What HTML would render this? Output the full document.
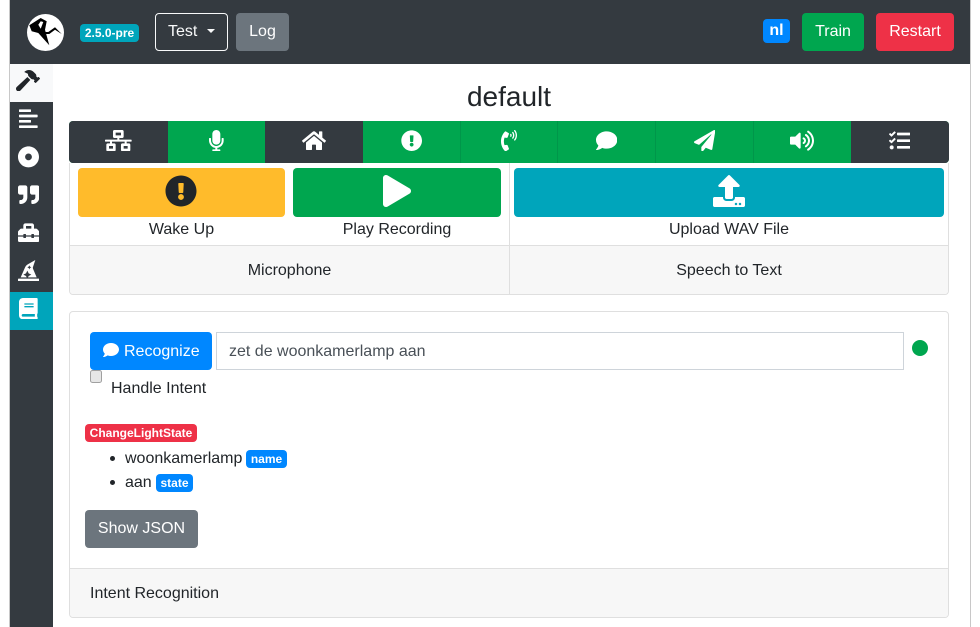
<!DOCTYPE html>
<html lang="en">
<head>
<meta charset="utf-8">
<title>default</title>
<style>
html,body{margin:0;padding:0;background:#fff}
body{width:980px;height:627px;position:relative;overflow:hidden;font:16px/24px "Liberation Sans",sans-serif;color:#212529}
div,span,svg{position:absolute;box-sizing:border-box}
svg{fill:#fff;display:block}
.t{white-space:nowrap;text-align:center}
.btn{border-radius:4px;color:#fff;text-align:center;line-height:36px;white-space:nowrap}
.badge{border-radius:4px;color:#fff;font-weight:700;font-size:12px;line-height:18px;text-align:center;white-space:nowrap}
.tb{top:121px;height:42px}
.dark{background:#343a40}
.green{background:#00a64f}
.sep{position:absolute;top:121px;width:1px;height:42px;background:#00964a}
</style>
</head>
<body>
<!-- frame lines -->
<div style="left:9px;top:0;width:1px;height:627px;background:#c8c8c8"></div>
<div style="left:970px;top:0;width:1px;height:627px;background:#c8c8c8"></div>

<!-- navbar -->
<div class="dark" style="left:10px;top:0;width:960px;height:64px"></div>
<div style="left:27px;top:14px;width:37px;height:37px;border-radius:50%;background:#fff"></div>
<svg viewBox="0 0 37 37" style="left:27px;top:14px;width:37px;height:37px;fill:#000">
<path d="M2.300 11.300 L13.700 4 L19.700 7.300 L18 15.700 L22.300 31.300 L11.300 19 L4.700 17.300 Z"/>
<path d="M17 18 L21.300 18 L28 13.300 L34.700 20 L28 15.700 L22.300 20 L17 20 Z"/>
<path d="M13.700 7.300 L16.300 8 L13.700 14.700 L11.300 10.700 Z" fill="#fff"/>
</svg>
<div class="badge" style="left:80px;top:24px;width:59px;height:18px;background:#00a5bb">2.5.0-pre</div>
<div class="btn" style="left:155px;top:13px;width:73px;height:38px;border:1px solid #f8f9fa;color:#f8f9fa"></div>
<div class="t" style="left:168px;top:20px;color:#f8f9fa">Test</div>
<div style="left:207px;top:29px;width:0;height:0;border-top:4px solid #f8f9fa;border-left:4px solid transparent;border-right:4px solid transparent"></div>
<div class="btn" style="left:236px;top:13px;width:53px;height:38px;background:#6c757d;line-height:38px">Log</div>
<div class="btn" style="left:763px;top:19px;width:27px;height:24px;background:#0087ff;font-weight:700;line-height:24px">nl</div>
<div class="btn" style="left:802px;top:13px;width:62px;height:38px;background:#00a64f;line-height:38px">Train</div>
<div class="btn" style="left:876px;top:13px;width:78px;height:38px;background:#ee3147;line-height:38px">Restart</div>

<!-- sidebar -->
<div class="dark" style="left:10px;top:64px;width:43px;height:563px"></div>
<div style="left:10px;top:64px;width:43px;height:38px;background:#f8f9fa"></div>
<div style="left:10px;top:292px;width:43px;height:38px;background:#00a5bb"></div>
<svg viewBox="0 0 576 512" style="left:16px;top:70px;width:24px;height:21.33px;fill:#212529"><path d="M571.31 193.94l-22.63-22.63c-6.25-6.25-16.38-6.25-22.63 0l-11.31 11.31-28.9-28.9c5.63-21.31.36-44.9-16.35-61.61l-45.25-45.25c-62.48-62.48-163.79-62.48-226.28 0l90.51 45.25v18.75c0 16.97 6.74 33.25 18.75 45.25l49.14 49.14c16.71 16.71 40.3 21.98 61.61 16.35l28.9 28.9-11.31 11.31c-6.25 6.25-6.25 16.38 0 22.63l22.63 22.63c6.25 6.25 16.38 6.25 22.63 0l90.51-90.51c6.23-6.24 6.23-16.37-.02-22.62zm-286.72-15.2c-3.7-3.7-6.84-7.79-9.85-11.95L19.64 404.96c-25.57 23.88-26.26 64.19-1.53 88.93s65.05 24.05 88.93-1.53l238.13-255.07c-3.96-2.91-7.9-5.87-11.44-9.41l-49.14-49.14z"/></svg>
<svg viewBox="0 0 448 512" style="left:19px;top:108px;width:18.67px;height:21.33px"><path d="M12.83 352h262.34A12.82 12.82 0 0 0 288 339.17v-38.34A12.82 12.82 0 0 0 275.17 288H12.83A12.82 12.82 0 0 0 0 300.83v38.34A12.82 12.82 0 0 0 12.83 352zm0-256h262.34A12.82 12.82 0 0 0 288 83.17V44.83A12.82 12.82 0 0 0 275.17 32H12.83A12.82 12.82 0 0 0 0 44.83v38.34A12.82 12.82 0 0 0 12.83 96zM432 160H16a16 16 0 0 0-16 16v32a16 16 0 0 0 16 16h416a16 16 0 0 0 16-16v-32a16 16 0 0 0-16-16zm0 256H16a16 16 0 0 0-16 16v32a16 16 0 0 0 16 16h416a16 16 0 0 0 16-16v-32a16 16 0 0 0-16-16z"/></svg>
<svg viewBox="0 0 496 512" style="left:18px;top:146px;width:21px;height:21.67px"><path fill-rule="evenodd" d="M248 8C111 8 0 119 0 256s111 248 248 248 248-111 248-248S385 8 248 8zm0 168c44.200 0 80 35.800 80 80s-35.800 80-80 80-80-35.800-80-80 35.800-80 80-80z"/></svg>
<svg viewBox="0 0 512 512" style="left:18px;top:184px;width:21.33px;height:21.33px"><path d="M464 32H336c-26.5 0-48 21.5-48 48v128c0 26.5 21.5 48 48 48h80v64c0 35.3-28.7 64-64 64h-8c-13.3 0-24 10.7-24 24v48c0 13.3 10.7 24 24 24h8c88.4 0 160-71.6 160-160V80c0-26.5-21.5-48-48-48zm-288 0H48C21.5 32 0 53.500 0 80v128c0 26.5 21.5 48 48 48h80v64c0 35.3-28.7 64-64 64h-8c-13.3 0-24 10.7-24 24v48c0 13.3 10.7 24 24 24h8c88.4 0 160-71.6 160-160V80c0-26.5-21.5-48-48-48z"/></svg>
<svg viewBox="0 0 512 512" style="left:17.500px;top:222px;width:21.33px;height:21.33px"><path d="M502.63 214.63l-45.25-45.25c-6-6-14.14-9.37-22.63-9.37H384V80c0-26.51-21.49-48-48-48H176c-26.51 0-48 21.49-48 48v80H77.25c-8.49 0-16.62 3.37-22.63 9.37L9.37 214.63c-6 6-9.37 14.14-9.37 22.63V320h128v-16c0-8.84 7.16-16 16-16h32c8.84 0 16 7.16 16 16v16h128v-16c0-8.84 7.16-16 16-16h32c8.84 0 16 7.16 16 16v16h128v-82.75c0-8.48-3.37-16.62-9.37-22.62zM320 160H192V96h128v64zm64 208c0 8.84-7.16 16-16 16h-32c-8.84 0-16-7.16-16-16v-16H192v16c0 8.84-7.16 16-16 16h-32c-8.84 0-16-7.16-16-16v-16H0v96c0 17.67 14.33 32 32 32h448c17.67 0 32-14.33 32-32v-96H384v16z"/></svg>
<svg viewBox="0 0 512 512" style="left:17.500px;top:260px;width:21.33px;height:21.33px"><path d="M496 448H16c-8.84 0-16 7.16-16 16v32c0 8.84 7.16 16 16 16h480c8.84 0 16-7.16 16-16v-32c0-8.84-7.16-16-16-16zm-304-64l-64-32 64-32 32-64 32 64 64 32-64 32-16 32h208l-86.41-201.63a63.955 63.955 0 0 1-1.89-45.45L416 0 228.42 107.19a127.989 127.989 0 0 0-53.46 59.15L64 416h144l-16-32zm64-224l16-32 16 32 32 16-32 16-16 32-16-32-32-16 32-16z"/></svg>
<svg viewBox="0 0 448 512" style="left:19px;top:298px;width:18.67px;height:21.33px"><path d="M448 360V24c0-13.3-10.7-24-24-24H96C43 0 0 43 0 96v320c0 53 43 96 96 96h328c13.3 0 24-10.7 24-24v-16c0-7.5-3.5-14.3-8.9-18.7-4.2-15.4-4.2-59.3 0-74.7 5.4-4.3 8.9-11.1 8.9-18.6zM128 134c0-3.3 2.7-6 6-6h212c3.3 0 6 2.7 6 6v20c0 3.3-2.7 6-6 6H134c-3.3 0-6-2.7-6-6v-20zm0 64c0-3.3 2.7-6 6-6h212c3.3 0 6 2.7 6 6v20c0 3.3-2.7 6-6 6H134c-3.3 0-6-2.7-6-6v-20zm253.4 250H96c-17.7 0-32-14.3-32-32 0-17.6 14.4-32 32-32h285.4c-1.9 17.1-1.9 46.9 0 64z"/></svg>

<!-- title -->
<div class="t" style="left:69px;top:80px;width:880px;font-size:28px;line-height:34px">default</div>

<!-- toolbar -->
<div class="green tb" style="left:69px;width:880px;border-radius:4px"></div>
<div class="dark tb" style="left:69px;width:99px;border-radius:4px 0 0 4px"></div>
<div class="dark tb" style="left:265px;width:98px"></div>
<div class="dark tb" style="left:851px;width:98px;border-radius:0 4px 4px 0"></div>
<span class="sep" style="left:460px"></span>
<span class="sep" style="left:557px"></span>
<span class="sep" style="left:655px"></span>
<span class="sep" style="left:753px"></span>

<svg viewBox="0 0 640 512" style="left:105px;top:130px;width:26.67px;height:21.33px"><path d="M640 264v-16c0-8.84-7.16-16-16-16H344v-40h72c17.67 0 32-14.33 32-32V32c0-17.67-14.33-32-32-32H224c-17.67 0-32 14.33-32 32v128c0 17.67 14.33 32 32 32h72v40H16c-8.84 0-16 7.16-16 16v16c0 8.84 7.16 16 16 16h104v40H64c-17.67 0-32 14.33-32 32v128c0 17.67 14.33 32 32 32h160c17.67 0 32-14.33 32-32V352c0-17.67-14.33-32-32-32h-56v-40h304v40h-56c-17.67 0-32 14.33-32 32v128c0 17.67 14.33 32 32 32h160c17.67 0 32-14.33 32-32V352c0-17.67-14.33-32-32-32h-56v-40h104c8.84 0 16-7.16 16-16zM256 128V64h128v64H256zm-64 320H96v-64h96v64zm352 0h-96v-64h96v64z"/></svg>
<svg viewBox="0 0 352 512" style="left:209px;top:130px;width:14.67px;height:21.33px"><path d="M176 352c53.02 0 96-42.98 96-96V96c0-53.02-42.98-96-96-96S80 42.98 80 96v160c0 53.02 42.98 96 96 96zm160-160h-16c-8.84 0-16 7.16-16 16v48c0 74.8-64.49 134.82-140.79 127.38C96.71 376.89 48 317.11 48 250.3V208c0-8.84-7.16-16-16-16H16c-8.84 0-16 7.16-16 16v40.16c0 89.64 63.97 169.55 152 181.69V464H96c-8.84 0-16 7.16-16 16v16c0 8.84 7.16 16 16 16h160c8.84 0 16-7.16 16-16v-16c0-8.84-7.16-16-16-16h-56v-33.77C285.71 418.47 352 344.9 352 256v-48c0-8.84-7.16-16-16-16z"/></svg>
<svg viewBox="0 0 576 512" style="left:302px;top:130px;width:24px;height:21.33px"><path d="M280.37 148.26L96 300.11V464a16 16 0 0 0 16 16l112.06-.29a16 16 0 0 0 15.92-16V368a16 16 0 0 1 16-16h64a16 16 0 0 1 16 16v95.64a16 16 0 0 0 16 16.05L464 480a16 16 0 0 0 16-16V300L295.67 148.26a12.19 12.19 0 0 0-15.3 0zM571.6 251.47L488 182.56V44.05a12 12 0 0 0-12-12h-56a12 12 0 0 0-12 12v72.61L318.47 43a48 48 0 0 0-61 0L4.34 251.47a12 12 0 0 0-1.6 16.9l25.5 31A12 12 0 0 0 45.15 301l235.22-193.74a12.19 12.19 0 0 1 15.3 0L530.9 301a12 12 0 0 0 16.9-1.6l25.5-31a12 12 0 0 0-1.7-16.93z"/></svg>
<svg viewBox="0 0 512 512" style="left:401px;top:130px;width:21.33px;height:21.33px"><path d="M504 256c0 136.997-111.043 248-248 248S8 392.997 8 256C8 119.083 119.043 8 256 8s248 111.083 248 248zm-248 50c-25.405 0-46 20.595-46 46s20.595 46 46 46 46-20.595 46-46-20.595-46-46-46zm-43.673-165.346l7.418 136c.347 6.364 5.609 11.346 11.982 11.346h48.546c6.373 0 11.635-4.982 11.982-11.346l7.418-136c.375-6.874-5.098-12.654-11.982-12.654h-63.383c-6.884 0-12.356 5.78-11.981 12.654z"/></svg>
<svg viewBox="0 0 384 512" style="left:501px;top:130px;width:16px;height:21.33px"><path d="M97.333 506.966c-129.874-129.874-129.681-340.252 0-469.933 5.698-5.698 14.527-6.632 21.263-2.422l64.817 40.513a17.187 17.187 0 0 1 6.849 20.958l-32.408 81.021a17.188 17.188 0 0 1-17.669 10.719l-55.81-5.58c-21.051 58.261-20.612 122.471 0 179.515l55.811-5.581a17.188 17.188 0 0 1 17.669 10.719l32.408 81.022a17.188 17.188 0 0 1-6.849 20.958l-64.817 40.513a17.19 17.19 0 0 1-21.264-2.422zM247.126 95.473c11.832 20.047 11.832 45.008 0 65.055-3.95 6.693-13.108 7.959-18.718 2.581l-5.975-5.726c-3.911-3.748-4.793-9.622-2.261-14.41a32.063 32.063 0 0 0 0-29.945c-2.533-4.788-1.65-10.662 2.261-14.41l5.975-5.726c5.61-5.378 14.768-4.112 18.718 2.581zm91.787-91.187c60.14 71.604 60.092 175.882 0 247.428-4.474 5.327-12.53 5.746-17.552.933l-5.798-5.557c-4.56-4.371-4.977-11.529-.93-16.379 49.687-59.538 49.646-145.933 0-205.422-4.047-4.85-3.631-12.008.93-16.379l5.798-5.557c5.022-4.813 13.078-4.394 17.552.933zm-45.972 44.941c36.05 46.322 36.108 111.149 0 157.546-4.39 5.641-12.697 6.251-17.856 1.304l-5.818-5.579c-4.4-4.219-4.998-11.095-1.285-15.931 26.536-34.564 26.534-82.572 0-117.134-3.713-4.836-3.115-11.711 1.285-15.931l5.818-5.579c5.159-4.947 13.466-4.337 17.856 1.304z"/></svg>
<svg viewBox="0 0 512 512" style="left:596px;top:130px;width:21.33px;height:21.33px"><path d="M256 32C114.6 32 0 125.1 0 240c0 49.6 21.4 95 57 130.7C44.5 421.1 2.7 466 2.2 466.5c-2.2 2.3-2.8 5.7-1.5 8.7S4.8 480 8 480c66.3 0 116-31.8 140.6-51.4 32.7 12.3 69 19.4 107.4 19.4 141.4 0 256-93.1 256-208S397.4 32 256 32z"/></svg>
<svg viewBox="0 0 512 512" style="left:694px;top:130px;width:21.33px;height:21.33px"><path d="M476 3.2L12.5 270.6c-18.1 10.4-15.8 35.6 2.2 43.2L121 358.4l287.3-253.2c5.5-4.9 13.3 2.6 8.6 8.3L176 407v80.500c0 23.6 28.5 32.9 42.5 15.8L282 426l124.6 52.2c14.2 6 30.4-2.9 33-18.2l72-432C515 7.8 493.3-6.8 476 3.2z"/></svg>
<svg viewBox="0 0 576 512" style="left:790px;top:130px;width:24px;height:21.33px"><path d="M215.03 71.05L126.06 160H24c-13.26 0-24 10.74-24 24v144c0 13.25 10.74 24 24 24h102.06l88.97 88.95c15.03 15.03 40.97 4.47 40.97-16.97V88.02c0-21.46-25.96-31.98-40.97-16.97zm233.32-51.08c-11.17-7.33-26.18-4.24-33.51 6.95-7.34 11.17-4.22 26.18 6.95 33.51 66.27 43.49 105.82 116.6 105.82 195.58 0 78.98-39.55 152.09-105.82 195.58-11.17 7.32-14.29 22.34-6.95 33.5 7.04 10.71 21.93 14.56 33.51 6.95C528.27 439.58 576 351.33 576 256S528.27 72.43 448.35 19.97zM480 256c0-63.53-32.06-121.94-85.77-156.24-11.19-7.14-26.03-3.82-33.12 7.46s-3.78 26.21 7.41 33.36C408.27 165.97 432 209.11 432 256s-23.73 90.03-63.48 115.42c-11.19 7.14-14.5 22.07-7.41 33.36 6.51 10.36 21.12 15.14 33.12 7.46C447.94 377.94 480 319.54 480 256zm-141.77-76.87c-11.58-6.33-26.19-2.16-32.61 9.45-6.39 11.61-2.16 26.2 9.45 32.61C327.98 228.28 336 241.63 336 256c0 14.38-8.02 27.72-20.92 34.81-11.61 6.41-15.84 21-9.45 32.61 6.43 11.66 21.05 15.8 32.61 9.45 28.23-15.55 45.77-45 45.77-76.88s-17.54-61.32-45.78-76.86z"/></svg>
<svg viewBox="0 0 512 512" style="left:889px;top:130px;width:21.33px;height:21.33px"><path d="M139.61 35.5a12 12 0 0 0-17 0L58.93 98.81l-22.7-22.12a12 12 0 0 0-17 0L3.53 92.41a12 12 0 0 0 0 17l47.59 47.4a12.78 12.78 0 0 0 17.61 0l15.59-15.62L156.52 69a12.09 12.09 0 0 0 .09-17zm0 159.19a12 12 0 0 0-17 0l-63.68 63.72-22.7-22.1a12 12 0 0 0-17 0L3.53 252a12 12 0 0 0 0 17L51 316.5a12.77 12.77 0 0 0 17.6 0l15.7-15.69 72.2-72.22a12 12 0 0 0 .09-16.9zM64 368c-26.49 0-48.59 21.5-48.59 48S37.53 464 64 464a48 48 0 0 0 0-96zm432 16H208a16 16 0 0 0-16 16v32a16 16 0 0 0 16 16h288a16 16 0 0 0 16-16v-32a16 16 0 0 0-16-16zm0-320H208a16 16 0 0 0-16 16v32a16 16 0 0 0 16 16h288a16 16 0 0 0 16-16V80a16 16 0 0 0-16-16zm0 160H208a16 16 0 0 0-16 16v32a16 16 0 0 0 16 16h288a16 16 0 0 0 16-16v-32a16 16 0 0 0-16-16z"/></svg>

<!-- card 1 -->
<div style="left:69px;top:163px;width:880px;height:132px;border:1px solid #dfdfdf;border-top:0;border-radius:0 0 4px 4px"></div>
<div style="left:70px;top:246px;width:878px;height:48px;background:#f7f7f7;border-radius:0 0 3px 3px"></div>
<div style="left:70px;top:245px;width:878px;height:1px;background:#dfdfdf"></div>
<div style="left:509px;top:163px;width:1px;height:131px;background:#dfdfdf"></div>

<div style="left:78px;top:168px;width:207px;height:49px;background:#ffbb2b;border-radius:4px"></div>
<svg viewBox="0 0 512 512" style="left:165px;top:175px;width:32px;height:32px;fill:#212529"><path d="M504 256c0 136.997-111.043 248-248 248S8 392.997 8 256C8 119.083 119.043 8 256 8s248 111.083 248 248zm-248 50c-25.405 0-46 20.595-46 46s20.595 46 46 46 46-20.595 46-46-20.595-46-46-46zm-43.673-165.346l7.418 136c.347 6.364 5.609 11.346 11.982 11.346h48.546c6.373 0 11.635-4.982 11.982-11.346l7.418-136c.375-6.874-5.098-12.654-11.982-12.654h-63.383c-6.884 0-12.356 5.78-11.981 12.654z"/></svg>
<div style="left:293px;top:168px;width:208px;height:49px;background:#00a64f;border-radius:4px"></div>
<svg viewBox="0 0 448 512" style="left:383px;top:175px;width:28px;height:32px"><path d="M424.4 214.7L72.4 6.6C43.8-10.3 0 6.1 0 47.900V464c0 37.5 40.7 60.1 72.4 41.3l352-208c31.4-18.5 31.500-64.1 0-82.6z"/></svg>
<div style="left:514px;top:168px;width:430px;height:49px;background:#00a5bb;border-radius:4px"></div>
<svg viewBox="0 0 512 512" style="left:713px;top:175px;width:32px;height:32px"><path d="M296 384h-80c-13.3 0-24-10.7-24-24V192h-87.700c-17.800 0-26.700-21.500-14.100-34.100L242.300 5.700c7.500-7.500 19.800-7.500 27.300 0l152.200 152.200c12.600 12.600 3.700 34.100-14.100 34.100H320v168c0 13.300-10.700 24-24 24zm216-8v112c0 13.300-10.700 24-24 24H24c-13.300 0-24-10.700-24-24V376c0-13.300 10.700-24 24-24h136v8c0 30.900 25.100 56 56 56h80c30.900 0 56-25.100 56-56v-8h136c13.300 0 24 10.700 24 24zm-124 88c0-11-9-20-20-20s-20 9-20 20 9 20 20 20 20-9 20-20zm64 0c0-11-9-20-20-20s-20 9-20 20 9 20 20 20 20-9 20-20z"/></svg>

<div class="t" style="left:78px;top:218px;width:207px">Wake Up</div>
<div class="t" style="left:293px;top:218px;width:208px">Play Recording</div>
<div class="t" style="left:514px;top:218px;width:430px">Upload WAV File</div>
<div class="t" style="left:70px;top:259px;width:439px">Microphone</div>
<div class="t" style="left:510px;top:259px;width:438px">Speech to Text</div>

<!-- card 2 -->
<div style="left:69px;top:311px;width:880px;height:307px;border:1px solid #dfdfdf;border-radius:4px"></div>
<div style="left:70px;top:569px;width:878px;height:48px;background:#f7f7f7;border-radius:0 0 3px 3px"></div>
<div style="left:70px;top:568px;width:878px;height:1px;background:#dfdfdf"></div>

<div style="left:90px;top:332px;width:122px;height:38px;background:#0087ff;border-radius:4px"></div>
<svg viewBox="0 0 512 512" style="left:103px;top:342px;width:16px;height:16px"><path d="M256 32C114.6 32 0 125.1 0 240c0 49.600 21.400 95 57 130.700C44.500 421.100 2.700 466 2.200 466.500c-2.200 2.300-2.800 5.700-1.500 8.700S4.800 480 8 480c66.300 0 116-31.800 140.600-51.400 32.700 12.300 69 19.400 107.400 19.400 141.400 0 256-93.100 256-208S397.400 32 256 32z"/></svg>
<div class="t" style="left:124px;top:340px;color:#fff">Recognize</div>
<div style="left:216px;top:332px;width:688px;height:38px;border:1px solid #ced4da"></div>
<div class="t" style="left:229px;top:340px;color:#495057">zet de woonkamerlamp aan</div>
<div style="left:912px;top:340px;width:16px;height:16px;border-radius:50%;background:#00a64f"></div>

<div style="left:90px;top:370px;width:12px;height:13px;background:#e6e6e6;border:1px solid #a0a0a0;border-radius:2.500px"></div>
<div class="t" style="left:111px;top:377px">Handle Intent</div>

<div class="badge" style="left:85px;top:424px;width:112px;height:18px;background:#ee3147">ChangeLightState</div>
<div style="left:110px;top:456px;width:5px;height:5px;border-radius:50%;background:#212529"></div>
<div class="t" style="left:125px;top:447px">woonkamerlamp</div>
<div class="badge" style="left:246px;top:450px;width:41px;height:18px;background:#0087ff">name</div>
<div style="left:110px;top:480px;width:5px;height:5px;border-radius:50%;background:#212529"></div>
<div class="t" style="left:125px;top:471px">aan</div>
<div class="badge" style="left:156px;top:474px;width:37px;height:18px;background:#0087ff">state</div>

<div class="btn" style="left:85px;top:510px;width:113px;height:38px;background:#6c757d;line-height:37px">Show JSON</div>
<div class="t" style="left:90px;top:582px">Intent Recognition</div>
</body>
</html>
